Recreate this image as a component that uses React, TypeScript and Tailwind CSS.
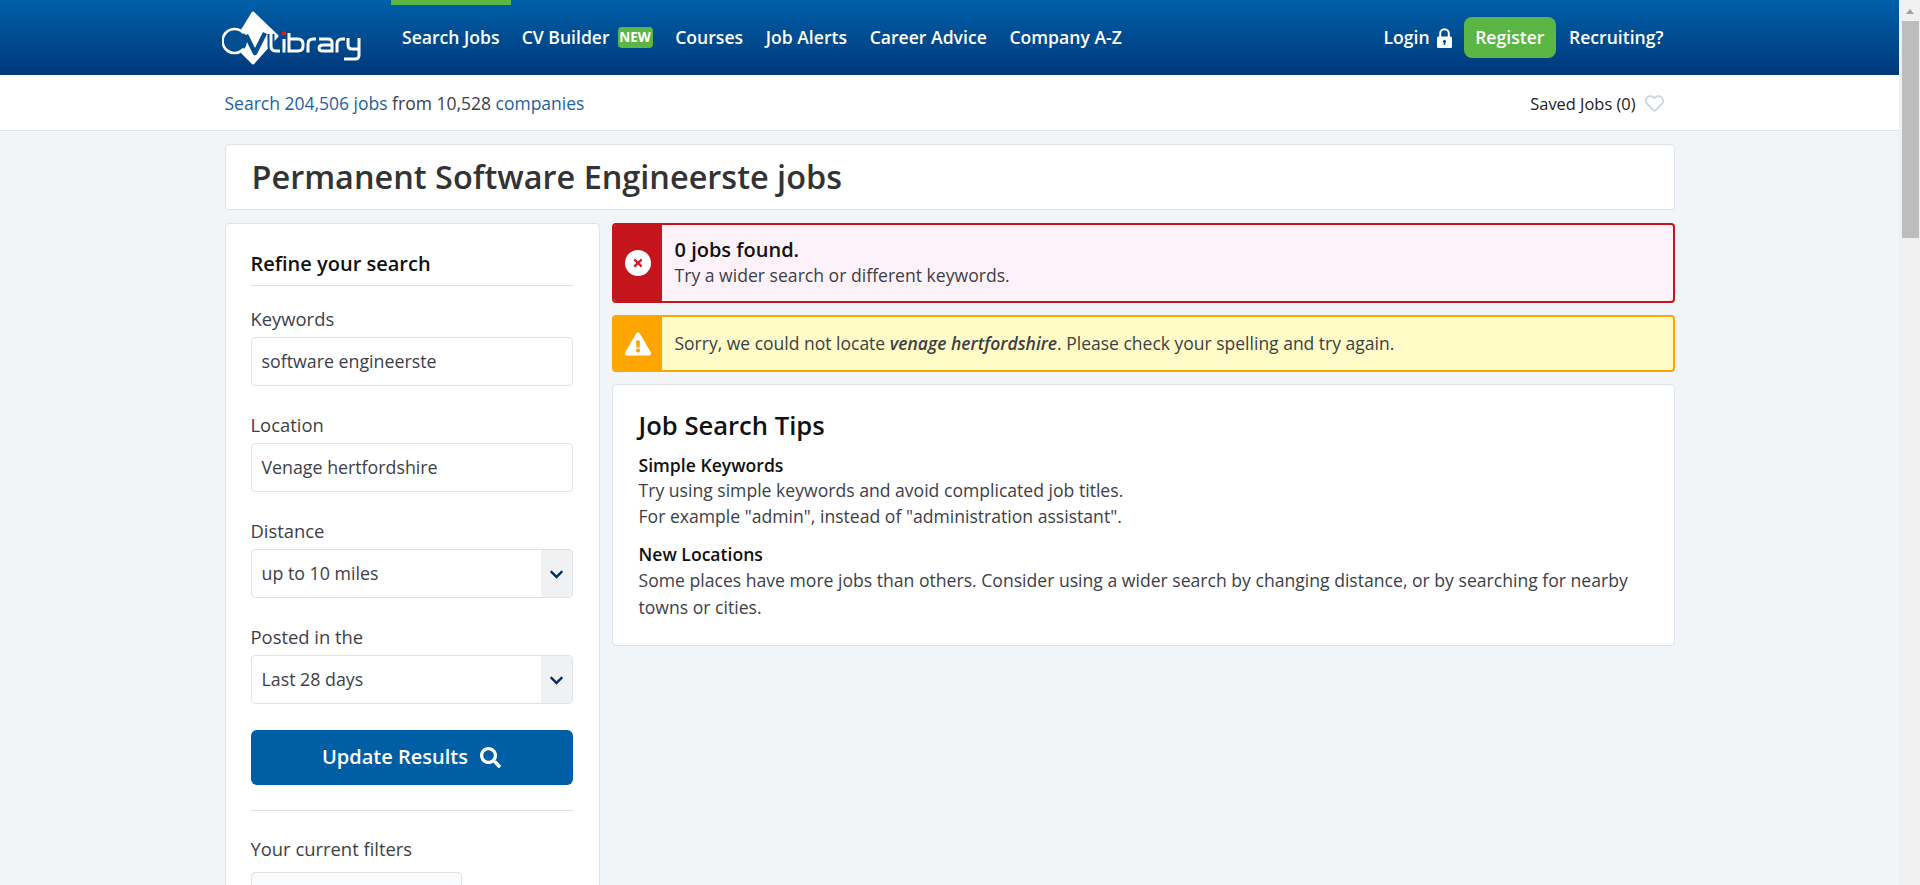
import { FaChevronDown, FaExclamationTriangle, FaRegHeart, FaSearch, FaTimes } from "react-icons/fa";

const navLinks = ["Courses", "Job Alerts", "Career Advice", "Company A-Z"];

function Logo() {
  return (
    <svg width="140" height="56" viewBox="0 0 140 56" className="shrink-0" fill="none">
      <path d="M31 3 L55 26 L31 53 L12 34 Z" fill="#fff" stroke="#fff" strokeWidth="3" strokeLinejoin="round" />
      <circle cx="13" cy="31" r="12" fill="#004f93" />
      <path d="M21 22.5 A12 12 0 1 0 21 39.5" stroke="#fff" strokeWidth="2.6" strokeLinecap="round" />
      <path d="M24 25 L33 43 L43 23" stroke="#024b8e" strokeWidth="4.5" strokeLinejoin="round" />
      <path d="M49 24 V36 Q49 41 54 41 H58" stroke="#024b8e" strokeWidth="7" />
      <g stroke="#fff" strokeWidth="3">
        <path d="M49 24 V36 Q49 41 54 41 H58" />
        <path d="M62 29 V42.5" />
        <path d="M67 23 V41 H76 Q81 41 81 36 V34 Q81 29 76 29 H67" />
        <path d="M86 42.5 V34 Q86 29 91 29 H94" />
        <path d="M97 29 H106 Q110 29 110 33 V41 H101 Q97 41 97 38 Q97 35 101 35 H110" />
        <path d="M115 42.5 V34 Q115 29 120 29 H123" />
        <path d="M126 28 V35 Q126 39 130 39 H137 M137 28 V45 Q137 49 133 49 H122" />
      </g>
      <circle cx="62" cy="23.5" r="2.2" fill="#e11b22" />
    </svg>
  );
}

function LockIcon() {
  return (
    <svg width="15" height="20" viewBox="0 0 15 20" className="ml-[7px] shrink-0" fill="none">
      <path d="M3.2 9 V5.5 A4.3 4.3 0 0 1 11.8 5.5 V9" stroke="#fff" strokeWidth="2" />
      <path d="M1.5 8.5 H13.5 Q15 8.5 15 10 V18.5 Q15 20 13.5 20 H1.5 Q0 20 0 18.5 V10 Q0 8.5 1.5 8.5 Z M7.5 12 A1.5 1.5 0 0 0 6.7 14.8 V17 H8.3 V14.8 A1.5 1.5 0 0 0 7.5 12 Z" fill="#fff" fillRule="evenodd" />
    </svg>
  );
}

function Field({ label, value, select }: { label: string; value: string; select?: boolean }) {
  return (
    <div>
      <div className="mb-[6px] h-[24px] text-[18.4px] leading-[24px] text-[#3d4047]">{label}</div>
      <div className="flex h-[49px] items-stretch overflow-hidden rounded-[4px] border border-[#dfe2e6] bg-white text-[17.8px] text-[#3d4047]">
        <div className="flex flex-1 items-center pl-[10px]">{value}</div>
        {select && (
          <div className="flex w-[31px] items-center justify-center bg-[#f0f1f3] pt-[2px] text-[#002f6c]">
            <FaChevronDown size={15} />
          </div>
        )}
      </div>
    </div>
  );
}

export default function App() {
  return (
    <div className="flex h-[885px] overflow-hidden bg-[#f1f5f8] font-['Open_Sans',sans-serif]">
      <div className="min-w-0 flex-1">
        <header className="h-[75px] bg-gradient-to-b from-[#0060a8] to-[#00387a]">
          <div className="mx-auto flex h-full w-[1450px] items-center text-[17.6px] font-semibold text-white">
            <div className="-ml-[2.5px] mr-[29px] flex items-center">
              <Logo />
            </div>
            <div className="flex h-full items-center border-t-[5px] border-[#5cb646] px-[11px] pb-[5px]">Search Jobs</div>
            <div className="ml-[11px] flex items-center">
              CV Builder
              <span className="ml-[8px] flex h-[21px] w-[35px] items-center justify-center rounded-[4px] bg-[#5cb646] text-[13.5px] font-bold">NEW</span>
            </div>
            {navLinks.map((link) => (
              <div key={link} className="ml-[22.6px]">{link}</div>
            ))}
            <div className="ml-auto flex items-center pr-[11px]">
              <span>Login</span>
              <LockIcon />
              <span className="ml-[12px] flex h-[41px] items-center rounded-[8px] bg-[#5cb646] px-[11.5px]">Register</span>
              <span className="ml-[13px]">Recruiting?</span>
            </div>
          </div>
        </header>
        <div className="h-[56px] border-b border-[#dfe2e6] bg-white pt-[2px]">
          <div className="mx-auto flex h-full w-[1450px] items-center text-[17.5px] text-[#3d4047]">
            <span>
              <span className="text-[#1f5f9f]">Search 204,506 jobs</span> from 10,528 <span className="text-[#1f5f9f]">companies</span>
            </span>
            <div className="ml-auto flex items-center pr-[11px] pt-[1px] text-[16.4px] text-[#222]">
              Saved Jobs (0)
              <FaRegHeart size={19} className="ml-[9px] text-[#ccd3e0]" />
            </div>
          </div>
        </div>
        <main className="mx-auto w-[1450px] pt-[13px]">
          <div className="flex h-[66px] items-center rounded-[4px] border border-[#dfe2e6] bg-white px-[26px] text-[32.45px] font-semibold text-[#333]">
            Permanent Software Engineerste jobs
          </div>
          <div className="mt-[13px] flex items-start gap-[12px]">
            <aside className="h-[700px] w-[375px] shrink-0 rounded-[4px] border border-[#dfe2e6] bg-white pl-[25px] pr-[26px] pt-[28px]">
              <div className="h-[34px] border-b border-[#dfe2e6] text-[20px] font-semibold leading-[24px] text-[#111]">Refine your search</div>
              <div className="mt-[21px] flex flex-col gap-[27.1px]">
                <Field label="Keywords" value="software engineerste" />
                <Field label="Location" value="Venage hertfordshire" />
                <Field label="Distance" value="up to 10 miles" select />
                <Field label="Posted in the" value="Last 28 days" select />
              </div>
              <button className="mt-[25.6px] flex h-[55px] w-full items-center justify-center gap-[12px] rounded-[6px] bg-[#005ea5] text-[20px] font-semibold text-white">
                Update Results
                <FaSearch size={21} />
              </button>
              <div className="mt-[25px] border-t border-[#dfe2e6]" />
              <div className="mt-[26px] h-[24px] text-[18.4px] leading-[24px] text-[#3d4047]">Your current filters</div>
              <div className="mt-[11px] h-[60px] w-[211px] rounded-[4px] border border-[#dfe2e6] bg-[#fafbfc]" />
            </aside>
            <div className="min-w-0 flex-1">
              <div className="flex h-[80px] overflow-hidden rounded-[4px] border-2 border-[#c4141c] bg-[#fdf2fa]">
                <div className="flex w-[48px] items-center justify-center bg-[#c4141c]">
                  <span className="flex h-[26px] w-[26px] items-center justify-center rounded-full bg-white text-[#d8141c]">
                    <FaTimes size={12} />
                  </span>
                </div>
                <div className="flex flex-col justify-center pb-[1px] pl-[13px]">
                  <div className="text-[20px] font-semibold leading-[26px] text-[#111]">0 jobs found.</div>
                  <div className="text-[17.6px] leading-[25px] text-[#3d4047]">Try a wider search or different keywords.</div>
                </div>
              </div>
              <div className="mt-[12px] flex h-[57px] overflow-hidden rounded-[4px] border-2 border-[#ffa500] bg-[#fffcc7]">
                <div className="flex w-[48px] items-center justify-center bg-[#ffa500] text-white">
                  <FaExclamationTriangle size={26} />
                </div>
                <div className="flex items-center pl-[13px] text-[17.5px] text-[#3d4047]">
                  <span>
                    Sorry, we could not locate <b className="font-semibold italic">venage hertfordshire</b>. Please check your spelling and try again.
                  </span>
                </div>
              </div>
              <div className="mt-[12px] h-[262px] rounded-[4px] border border-[#dfe2e6] bg-white px-[26px] pt-[23px] text-[17.6px] leading-[26.4px] text-[#3d4047]">
                <h2 className="text-[25.6px] font-semibold leading-[36px] text-[#111]">Job Search Tips</h2>
                <div className="mt-[9px] h-[24px] font-semibold leading-[24px] text-[#111]">Simple Keywords</div>
                <div>Try using simple keywords and avoid complicated job titles.</div>
                <div>For example "admin", instead of "administration assistant".</div>
                <div className="mt-[11px] font-semibold text-[#111]">New Locations</div>
                <div>Some places have more jobs than others. Consider using a wider search by changing distance, or by searching for nearby towns or cities.</div>
              </div>
            </div>
          </div>
        </main>
      </div>
      <div className="flex w-[21px] shrink-0 flex-col items-center bg-[#f0f0f0] pl-[1px]">
        <div className="mt-[9px] h-0 w-0 border-x-[4.5px] border-b-[5px] border-x-transparent border-b-[#a3a3a3]" />
        <div className="mt-[7px] h-[217px] w-[17px] bg-[#bdbdbd]" />
      </div>
    </div>
  );
}
